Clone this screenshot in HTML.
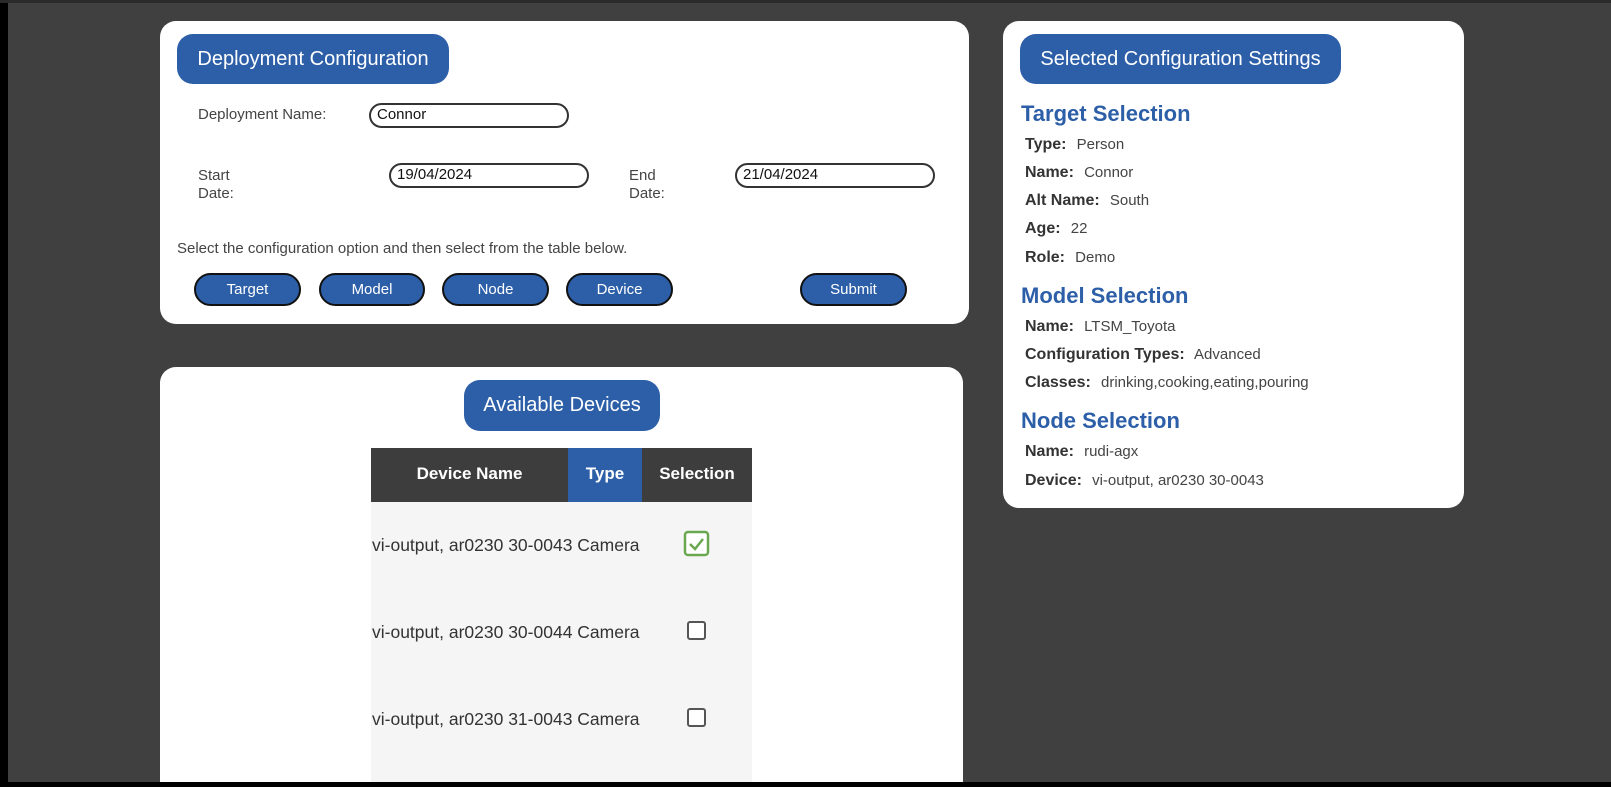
<!DOCTYPE html>
<html style="width:1611px;height:787px;overflow:hidden"><head><meta charset="utf-8"><style>
*{box-sizing:border-box;margin:0;padding:0}
body{width:1611px;height:787px;background:#404040;position:relative;overflow:hidden;font-family:"Liberation Sans",Arial,sans-serif;color:#333}
.a{position:absolute}
.card{position:absolute;background:#fff;border-radius:16px}
.pill{position:absolute;background:#2d5fa8;color:#fff;border-radius:16px;display:flex;align-items:center;justify-content:center;font-size:20px}
.btn{position:absolute;top:273px;height:33px;background:#2d5fa8;color:#fff;border:2px solid #111;border-radius:17px;display:flex;align-items:center;justify-content:center;font-size:15px}
.inp{position:absolute;height:25px;border:2.5px solid #333;border-radius:13px;font-size:15px;color:#111;padding-left:6px;line-height:20px}
.lbl{position:absolute;font-size:15px;color:#444;line-height:18px}
h3{position:absolute;color:#2d5fa8;font-size:22px;font-weight:bold;left:1021px}
.it{position:absolute;left:1025px;font-size:15px;color:#444}
.it b{color:#333;font-size:16px;margin-right:6px}
.row{position:absolute;left:372px;font-size:17.5px;color:#333}
.hd{position:absolute;top:464px;text-align:center;color:#fff;font-weight:bold;font-size:17px}
</style></head><body>
<div class="a" style="left:0;top:0;width:8px;height:787px;background:#000"></div>
<div class="a" style="left:0;top:0;width:1611px;height:3px;background:#2a2a2a"></div>

<div class="card" style="left:160px;top:21px;width:809px;height:303px"></div>
<div class="pill" style="left:177px;top:34px;width:272px;height:50px">Deployment Configuration</div>
<div class="lbl" style="left:198px;top:106px">Deployment Name:</div>
<div class="inp" style="left:369px;top:103px;width:200px">Connor</div>
<div class="lbl" style="left:198px;top:167px">Start<br>Date:</div>
<div class="inp" style="left:389px;top:163px;width:200px">19/04/2024</div>
<div class="lbl" style="left:629px;top:167px">End<br>Date:</div>
<div class="inp" style="left:735px;top:163px;width:200px">21/04/2024</div>
<div class="lbl" style="left:177px;top:240px;font-size:15px">Select the configuration option and then select from the table below.</div>
<div class="btn" style="left:194px;width:107px">Target</div>
<div class="btn" style="left:319px;width:106px">Model</div>
<div class="btn" style="left:442px;width:107px">Node</div>
<div class="btn" style="left:566px;width:107px">Device</div>
<div class="btn" style="left:800px;width:107px">Submit</div>

<div class="card" style="left:160px;top:367px;width:803px;height:430px"></div>
<div class="pill" style="left:464px;top:380px;width:196px;height:51px">Available Devices</div>
<div class="a" style="left:371px;top:448px;width:381px;height:340px;background:#f5f5f5"></div>
<div class="a" style="left:371px;top:448px;width:381px;height:54px;background:#3d3d3d"></div>
<div class="a" style="left:568px;top:448px;width:74px;height:54px;background:#2d5fa8"></div>
<div class="hd" style="left:371px;width:197px">Device Name</div>
<div class="hd" style="left:568px;width:74px">Type</div>
<div class="hd" style="left:642px;width:110px">Selection</div>
<div class="row" style="top:535px">vi-output, ar0230 30-0043&nbsp;Camera</div>
<div class="row" style="top:622px">vi-output, ar0230 30-0044&nbsp;Camera</div>
<div class="row" style="top:709px">vi-output, ar0230 31-0043&nbsp;Camera</div>
<svg class="a" style="left:683px;top:530px" width="28" height="28"><rect x="2" y="2" width="23" height="23" rx="3" fill="#fff" stroke="#6aa84f" stroke-width="2.5"/><path d="M7 14 L12 19 L20 9" fill="none" stroke="#6aa84f" stroke-width="2.5"/></svg>
<div class="a" style="left:687px;top:621px;width:19px;height:19px;border:2px solid #555;border-radius:3px;background:#fff"></div>
<div class="a" style="left:687px;top:708px;width:19px;height:19px;border:2px solid #555;border-radius:3px;background:#fff"></div>

<div class="card" style="left:1003px;top:21px;width:461px;height:487px"></div>
<div class="pill" style="left:1020px;top:34px;width:321px;height:50px">Selected Configuration Settings</div>
<h3 style="top:101px">Target Selection</h3>
<div class="it" style="top:136px"><b>Type:</b> Person</div>
<div class="it" style="top:164px"><b>Name:</b> Connor</div>
<div class="it" style="top:192px"><b>Alt Name:</b> South</div>
<div class="it" style="top:220px"><b>Age:</b> 22</div>
<div class="it" style="top:249px"><b>Role:</b> Demo</div>
<h3 style="top:283px">Model Selection</h3>
<div class="it" style="top:318px"><b>Name:</b> LTSM_Toyota</div>
<div class="it" style="top:346px"><b>Configuration Types:</b> Advanced</div>
<div class="it" style="top:374px"><b>Classes:</b> drinking,cooking,eating,pouring</div>
<h3 style="top:408px">Node Selection</h3>
<div class="it" style="top:443px"><b>Name:</b> rudi-agx</div>
<div class="it" style="top:472px"><b>Device:</b> vi-output, ar0230 30-0043</div>
<div class="a" style="left:0;top:782px;width:1611px;height:5px;background:#000;z-index:10"></div>
</body></html>
